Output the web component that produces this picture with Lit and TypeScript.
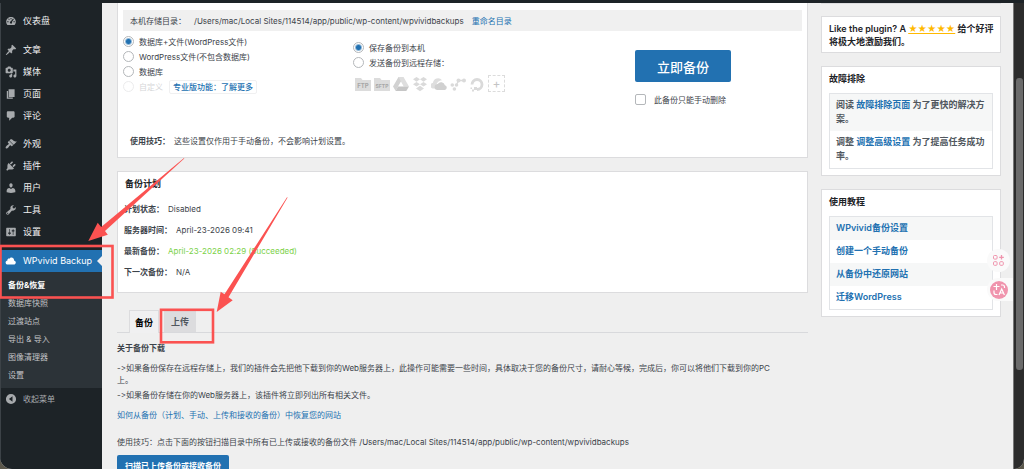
import { LitElement, html, css, svg, nothing } from "lit";
import { customElement, property, state } from "lit/decorators.js";
import { classMap } from "lit/directives/class-map.js";

const ICONS: Record<string, string> = {
  dashboard:
    "M4 16.5h12c1.2-1.300 2-3.100 2-5.200C18 6.800 14.400 3.300 10 3.300S2 6.800 2 11.300c0 2.100.8 3.900 2 5.200zM9.200 5h1.600v2.200H9.200zM5.300 6.800l1.100-1.100 1.500 1.500-1.100 1.100zM3.700 10.400h2.200V12H3.700zM14.100 10.400h2.200V12h-2.200zM13.500 5.700l1.200 1.200-3.200 4.600c.6.600.6 1.600 0 2.300-.7.800-2 .8-2.800 0-.7-.7-.7-2 0-2.700.3-.3.700-.5 1.100-.5z",
  post: "M10.440 3.020l1.820-1.820 6.360 6.350-1.830 1.820c-1.050-.68-2.480-.57-3.410.36l-.75.75c-.92.93-1.040 2.350-.35 3.410l-1.830 1.820-2.410-2.410-2.800 2.790c-.42.42-3.380 2.710-3.800 2.290s1.860-3.390 2.280-3.810l2.790-2.790L4.100 9.360l1.830-1.820c1.050.69 2.480.57 3.400-.36l.75-.75c.93-.92 1.050-2.350.36-3.410z",
  media:
    "M13 11V4c0-.55-.45-1-1-1h-1.670L9 1H5L3.670 3H2c-.55 0-1 .45-1 1v7c0 .55.45 1 1 1h10c.55 0 1-.45 1-1zM7 4.500c1.380 0 2.500 1.120 2.500 2.500S8.380 9.500 7 9.500 4.500 8.380 4.500 7 5.620 4.500 7 4.500zM14 6h5v10.500c0 1.380-1.120 2.500-2.500 2.500S14 17.880 14 16.500s1.120-2.500 2.500-2.500c.17 0 .34.02.5.05V9h-3V6zm-4 8.050V13h2v3.500c0 1.380-1.120 2.500-2.500 2.500S7 17.880 7 16.500 8.120 14 9.500 14c.17 0 .34.02.5.05z",
  page: "M6 15V2h10v13H6zm-1 1h8v2H3V5h2v11z",
  comments:
    "M5 2h9c1.100 0 2 .9 2 2v7c0 1.100-.9 2-2 2h-2l-5 5v-5H5c-1.100 0-2-.9-2-2V4c0-1.100.9-2 2-2z",
  appearance:
    "M14.480 11.060L7.410 3.990l1.500-1.500c.5-.56 2.300-.47 3.510.32 1.210.8 1.430 1.280 2.910 2.100 1.180.64 2.450 1.260 4.450.85zm-.71.71L6.700 4.700 4.930 6.470c-.39.39-.39 1.020 0 1.410l1.060 1.060c.39.39.39 1.030 0 1.420-.6.6-1.430 1.110-2.210 1.690-.35.26-.7.53-1.010.84C1.430 14.230.4 16.080 1.400 17.070c.99 1 2.840-.03 4.180-1.360.31-.31.58-.66.85-1.020.57-.78 1.080-1.610 1.690-2.210.39-.39 1.020-.39 1.410 0l1.060 1.060c.39.39 1.020.39 1.410 0z",
  plugins:
    "M13.110 4.360L9.870 7.600 8 5.730l3.240-3.240c.35-.34 1.050-.2 1.560.32.52.51.66 1.210.31 1.550zm-8 1.770l.91-1.120 9.010 9.010-1.190.84c-.71.71-2.630 1.160-3.820 1.160H6.140L4.900 17.260c-.59.59-1.540.59-2.120 0-.59-.58-.59-1.530 0-2.120l1.240-1.240v-3.880c0-1.130.4-3.190 1.090-3.890zm7.260 3.970l3.240-3.240c.34-.35 1.040-.21 1.550.31.52.51.66 1.210.31 1.550l-3.240 3.250z",
  users:
    "M10 9.250c-2.270 0-2.730-3.440-2.730-3.440C7 4.020 7.820 2 9.970 2c2.160 0 2.980 2.020 2.710 3.810 0 0-.41 3.440-2.680 3.440zm0 2.570L12.720 10c2.390 0 4.520 2.330 4.520 4.530v2.490s-3.650 1.130-7.240 1.130c-3.650 0-7.240-1.130-7.240-1.130v-2.490c0-2.250 1.940-4.480 4.470-4.480z",
  tools:
    "M16.680 9.770c-1.340 1.340-3.300 1.670-4.950.99l-5.410 6.520c-.99.99-2.590.99-3.580 0s-.99-2.590 0-3.570l6.520-5.420c-.68-1.650-.35-3.610.99-4.950 1.280-1.280 3.120-1.620 4.720-1.060l-2.890 2.890 2.820 2.820 2.860-2.870c.53 1.580.18 3.390-1.080 4.650zM3.810 16.210c.4.39 1.040.39 1.430 0 .4-.4.4-1.040 0-1.430-.39-.4-1.030-.4-1.430 0-.39.39-.39 1.030 0 1.430z",
  settings:
    "M18 16V4c0-.55-.45-1-1-1H3c-.55 0-1 .45-1 1v12c0 .55.45 1 1 1h14c.55 0 1-.45 1-1zM8 11h1c.55 0 1 .45 1 1s-.45 1-1 1H8v1.500c0 .28-.22.5-.5.5s-.5-.22-.5-.5V13H6c-.55 0-1-.45-1-1s.45-1 1-1h1V5.500c0-.28.22-.5.5-.5s.5.22.5.5V11zm5-2h-1c-.55 0-1-.45-1-1s.45-1 1-1h1V5.500c0-.28.22-.5.5-.5s.5.22.5.5V7h1c.55 0 1 .45 1 1s-.45 1-1 1h-1v5.500c0 .28-.22.5-.5.5s-.5-.22-.5-.5V9z",
  cloud:
    "M14.900 9c1.800.2 3.100 1.700 3.100 3.500 0 1.900-1.600 3.500-3.500 3.500h-10C2.600 16 1 14.400 1 12.500 1 10.700 2.300 9.300 4.100 9 4 8.900 4 8.700 4 8.500 4 7.100 5.100 6 6.500 6c.3 0 .7.1.9.2C8.100 4.900 9.400 4 11 4c2.200 0 4 1.800 4 4 0 .4-.1.7-.1 1z",
  collapse:
    "M10 1.500a8.500 8.500 0 1 0 0 17 8.500 8.500 0 0 0 0-17zM12.500 5.500v9L6.500 10z",
};

const MENU: [string, string][][] = [
  [["dashboard", "仪表盘"]],
  [["post", "文章"], ["media", "媒体"], ["page", "页面"], ["comments", "评论"]],
  [["appearance", "外观"], ["plugins", "插件"], ["users", "用户"], ["tools", "工具"], ["settings", "设置"]],
];

const SUBMENU = ["备份&恢复", "数据库快照", "过渡站点", "导出 & 导入", "图像清理器", "设置"];

const BACKUP_DIR = "/Users/mac/Local Sites/114514/app/public/wp-content/wpvividbackups";

const shared = css`
  *, *::before, *::after { box-sizing: border-box; }
  a { color: #2271b1; text-decoration: none; }
  h2, p, ul { margin: 0; padding: 0; }
  ul { list-style: none; }
  button { font-family: inherit; cursor: pointer; }
`;

@customElement("dash-icon")
export class DashIcon extends LitElement {
  @property() name = "";
  static styles = css`
    :host { display: block; flex: none; width: 12px; height: 12px; }
    svg { display: block; width: 100%; height: 100%; fill: currentColor; }
  `;
  render() {
    return html`<svg viewBox="0 0 20 20" aria-hidden="true"><path fill-rule="evenodd" d=${ICONS[this.name] ?? ""}></path></svg>`;
  }
}

@customElement("admin-menu")
export class AdminMenu extends LitElement {
  static styles = [
    shared,
    css`
      :host { display: block; background: #1d2327; border-left: 1px solid #3c4247; padding-top: 7px; font-size: 9px; }
      .group { margin-bottom: 7px; }
      .group + .group { margin-bottom: 6px; }
      .item {
        display: flex; align-items: center; gap: 6px; width: 100%; height: 22px; padding: 0 4px;
        color: #f0f0f1; font-weight: 400; line-height: 12px;
      }
      .item dash-icon { color: #a7aaad; }
      .current { position: relative; margin-top: 7px; background: #2271b1; color: #fff; }
      .current dash-icon { color: #fff; }
      .current::after {
        content: ""; position: absolute; right: 0; top: 6px;
        border: 5px solid transparent; border-left: 0; border-right-color: #f0f0f1;
      }
      .submenu { background: #2c3338; padding: 4px 0; font-size: 8px; }
      .submenu a { display: block; padding: 0 7px; line-height: 18px; color: #c3c4c7; }
      .submenu .active { color: #fff; font-weight: 700; }
      button.item { background: none; border: 0; color: #a7aaad; font-size: 8px; font-weight: 400; text-align: left; }
    `,
  ];
  render() {
    return html`
      <nav aria-label="WordPress">
        ${MENU.map(
          (group) => html`<ul class="group">
            ${group.map(([icon, label]) => html`<li><a class="item" href="#"><dash-icon name=${icon}></dash-icon>${label}</a></li>`)}
          </ul>`
        )}
        <a class="item current" href="#"><dash-icon name="cloud"></dash-icon>WPvivid Backup</a>
        <ul class="submenu">
          ${SUBMENU.map((label, i) => html`<li><a href="#" class=${classMap({ active: i === 0 })}>${label}</a></li>`)}
        </ul>
        <button class="item" type="button"><dash-icon name="collapse"></dash-icon>收起菜单</button>
      </nav>
    `;
  }
}

const folder = (label: string, size: number) => svg`
  <path d="M0 2h6l1.500 2H16v11H0z" fill="#dcdcdc"></path>
  <text x="8" y="12" font-size=${size} font-weight="700" text-anchor="middle" fill="#a6a6a6">${label}</text>`;

const REMOTES = [
  { name: "FTP", art: folder("FTP", 6) },
  { name: "SFTP", art: folder("SFTP", 5) },
  {
    name: "Google Drive",
    art: svg`<path d="M5.500 1h5L5 10.500 2.700 15 0 10.500z" fill="#d2d2d2"></path>
      <path d="M5.500 1h5L16 10.500h-5.300z" fill="#dedede"></path>
      <path d="M5 10.500h11L13.300 15H2.700z" fill="#c6c6c6"></path>`,
  },
  {
    name: "Dropbox",
    art: svg`<path d="M4.500 1L8 3.300 4.500 5.700 1 3.300zM11.500 1L15 3.300l-3.500 2.400L8 3.300zM4.500 5.900L8 8.200l-3.500 2.400L1 8.200zM11.500 5.900L15 8.200l-3.500 2.400L8 8.200zM8 9.800l4 2.700L8 15.200l-4-2.700z" fill="#dadada"></path>`,
  },
  {
    name: "OneDrive",
    art: svg`<path d="M1.500 12.500A3 3 0 0 1 2 6.700 5 5 0 0 1 11 4.300 6 6 0 0 0 6 7.500 4 4 0 0 0 4.500 12.500z" fill="#dedede"></path>
      <path d="M6.500 14a3 3 0 0 1 .2-6 4 4 0 0 1 7.200 1.200A2.500 2.500 0 0 1 14 14z" fill="#d0d0d0"></path>`,
  },
  {
    name: "Amazon S3",
    art: svg`<g fill="#dadada"><circle cx="2.300" cy="9" r="1.800"></circle><circle cx="6.500" cy="9" r="1.800"></circle><circle cx="4.400" cy="13" r="1.800"></circle>
      <circle cx="8.500" cy="4.500" r="2"></circle><circle cx="14" cy="4.500" r="2"></circle></g>
      <path d="M6.500 9l2-4.500H14" fill="none" stroke="#dadada" stroke-width="1.300"></path>`,
  },
  {
    name: "DigitalOcean",
    art: svg`<path d="M3 8.500a5 5 0 1 1 5 5" fill="none" stroke="#dadada" stroke-width="2.800"></path>
      <path d="M5 11h3v3H5zM3 13.500h2v2H3zM1.500 11.500h1.500v1.500H1.500z" fill="#dadada"></path>`,
  },
];

@customElement("backup-panel")
export class BackupPanel extends LitElement {
  @state() private content = 0;
  @state() private target = 0;
  static styles = [
    shared,
    css`
      :host { display: block; background: #fff; border: 1px solid #dcdcde; border-top: 0; padding: 7px 5px 10px; }
      .dir { display: flex; align-items: center; background: #f0f0f0; height: 21px; padding: 0 7px; gap: 8px; }
      .options { display: grid; grid-template-columns: 230px 282px 1fr; min-height: 104px; }
      .what { padding-top: 3px; }
      .where { padding-top: 9px; }
      .row { display: flex; align-items: center; gap: 5px; height: 15px; }
      .off { color: #d5d6d8; }
      .pro { border: 1px solid #f0f0f1; border-radius: 2px; padding: 0 3px; margin-left: 1px; font-weight: 500; line-height: 12px; }
      input { appearance: none; flex: none; margin: 0; width: 11px; height: 11px; border: 1px solid #b4b7ba; background: #fff; }
      input[type="radio"] { border-radius: 50%; }
      input[type="radio"]:checked { background: radial-gradient(circle, #2271b1 2px, #fff 4px); }
      input[type="checkbox"] { border-radius: 2px; }
      input:disabled { border-color: #ececed; }
      .remotes { display: flex; gap: 3px; padding: 5px 0 0 2px; align-items: center; }
      .remotes svg { width: 16px; height: 16px; }
      .add { width: 17px; height: 17px; border: 1px dashed #dcdcdc; background: none; color: #c4c4c4; font-size: 12px; line-height: 12px; padding: 0; }
      .go { padding-top: 19px; }
      .primary { display: block; width: 96px; height: 32px; border: 0; border-radius: 2px; background: #2271b1; color: #fff; font-size: 13px; font-weight: 500; padding: 0; }
      .keep { display: flex; align-items: center; gap: 8px; margin-top: 12px; }
      .tip { padding: 0 7px; line-height: 12px; }
      .tip b { font-weight: 700; margin-right: 4px; }
    `,
  ];
  private radio(group: string, label: string, index: number, current: number, pick: (i: number) => void, disabled = false) {
    return html`<input type="radio" name=${group} id=${group + index} .checked=${index === current} ?disabled=${disabled} @change=${() => pick(index)} />
      <label for=${group + index}>${label}</label>`;
  }
  render() {
    const what = ["数据库+文件(WordPress文件)", "WordPress文件(不包含数据库)", "数据库", "自定义"];
    const where = ["保存备份到本机", "发送备份到远程存储："];
    return html`
      <div class="dir"><span>本机存储目录：</span><span>${BACKUP_DIR}</span><a href="#">重命名目录</a></div>
      <div class="options">
        <div class="what">
          ${what.map(
            (label, i) => html`<div class=${classMap({ row: true, off: i === 3 })}>
              ${this.radio("what", label, i, this.content, (n) => (this.content = n), i === 3)}
              ${i === 3 ? html`<a class="pro" href="#">专业版功能：了解更多</a>` : nothing}
            </div>`
          )}
        </div>
        <div class="where">
          ${where.map((label, i) => html`<div class="row">${this.radio("where", label, i, this.target, (n) => (this.target = n))}</div>`)}
          <div class="remotes">
            ${REMOTES.map((r) => html`<svg viewBox="0 0 16 16" role="img" aria-label=${r.name}>${r.art}</svg>`)}
            <button class="add" type="button">+</button>
          </div>
        </div>
        <div class="go">
          <button class="primary" type="button">立即备份</button>
          <div class="keep"><input type="checkbox" id="keep" /><label for="keep">此备份只能手动删除</label></div>
        </div>
      </div>
      <p class="tip"><b>使用技巧：</b>这些设置仅作用于手动备份，不会影响计划设置。</p>
    `;
  }
}

@customElement("schedule-panel")
export class SchedulePanel extends LitElement {
  static styles = [
    shared,
    css`
      :host { display: block; background: #fff; border: 1px solid #dcdcde; margin-top: 13px; padding: 5px 6px 9px; }
      h2 { font-size: 9px; line-height: 14px; padding-left: 1px; color: #1d2327; margin-bottom: 8px; }
      .row { display: flex; gap: 4px; line-height: 21px; }
      b { font-weight: 700; }
      .ok { color: #7bd148; }
    `,
  ];
  render() {
    const rows = [
      ["计划状态：", "Disabled"],
      ["服务器时间：", "April-23-2026 09:41"],
      ["最新备份：", "April-23-2026 02:29 (Succeeded)"],
      ["下一次备份：", "N/A"],
    ];
    return html`<h2>备份计划</h2>
      ${rows.map(([k, v], i) => html`<div class="row"><b>${k}</b><span class=${classMap({ ok: i === 2 })}>${v}</span></div>`)}`;
  }
}

@customElement("backup-list")
export class BackupList extends LitElement {
  static styles = [
    shared,
    css`
      :host { display: block; margin-top: 17px; }
      .tabs { display: flex; gap: 5px; padding-left: 12px; border-bottom: 1px solid #d8d9dc; }
      .tab { height: 22px; padding: 0 7px; border: 0; background: #dcdcde; color: #50575e; font-size: 9px; font-weight: 600; }
      .tab.on { margin-bottom: -1px; height: 23px; padding: 0 5px; border: 1px solid #dcdcde; border-bottom: 0; background: #f0f0f1; color: #000; font-weight: 700; }
      h2 { font-size: 8px; line-height: 12px; margin: 9px 0 8px; }
      p { line-height: 12px; margin-bottom: 3px; }
      .guide { margin: 8px 0 15px; }
      .primary { height: 20px; padding: 0 8px; margin-top: 4px; border: 0; border-radius: 2px; background: #2271b1; color: #fff; font-size: 8px; font-weight: 600; }
    `,
  ];
  render() {
    return html`
      <div class="tabs" role="tablist">
        <button class="tab on" role="tab" type="button" aria-selected="true">备份</button>
        <button class="tab" role="tab" type="button" aria-selected="false">上传</button>
      </div>
      <h2>关于备份下载</h2>
      <p>-&gt;如果备份保存在远程存储上，我们的插件会先把他下载到你的Web服务器上，此操作可能需要一些时间，具体取决于您的备份尺寸，请耐心等候，完成后，你可以将他们下载到你的PC<br />上。</p>
      <p>-&gt;如果备份存储在你的Web服务器上，该插件将立即列出所有相关文件。</p>
      <p class="guide"><a href="#">如何从备份（计划、手动、上传和接收的备份）中恢复您的网站</a></p>
      <p>使用技巧：点击下面的按钮扫描目录中所有已上传或接收的备份文件 ${BACKUP_DIR}</p>
      <button class="primary" type="button">扫描已上传备份或接收备份</button>
    `;
  }
}

@customElement("side-cards")
export class SideCards extends LitElement {
  static styles = [
    shared,
    css`
      :host { display: block; font-size: 9px; font-weight: 600; color: #50575e; }
      .card { background: #fff; border: 1px solid #dcdcde; padding: 5px 7px 6px; margin-bottom: 13px; }
      .rate { margin-top: 12px; padding: 5px 2px 4px 7px; color: #1d2327; line-height: 13px; }
      .edge { border-bottom: 1px solid #dcdcde; }
      .stars { color: #ffb900; text-decoration: underline; }
      h2 { font-size: 9px; line-height: 14px; color: #1d2327; margin-bottom: 7px; }
      ul { border: 1px solid #e2e4e7; }
      li:nth-child(odd) { background: #f6f7f7; }
      li { padding: 4px 6px 5px; line-height: 14px; }
    `,
  ];
  render() {
    return html`
      <div class="edge"></div>
      <section class="card rate">Like the plugin? A <a class="stars" href="#">★★★★★</a> 给个好评将极大地激励我们。</section>
      <section class="card">
        <h2>故障排除</h2>
        <ul>
          <li>阅读 <a href="#">故障排除页面</a> 为了更快的解决方案。</li>
          <li>调整 <a href="#">调整高级设置</a> 为了提高任务成功率。</li>
        </ul>
      </section>
      <section class="card">
        <h2>使用教程</h2>
        <ul>
          ${["WPvivid备份设置", "创建一个手动备份", "从备份中还原网站", "迁移WordPress"].map((t) => html`<li><a href="#">${t}</a></li>`)}
        </ul>
      </section>
    `;
  }
}

@customElement("app-root")
export class AppRoot extends LitElement {
  static styles = [
    shared,
    css`
      :host {
        display: block; position: relative; height: 100vh; overflow: hidden; background: #5b574b;
        font-family: Inter, "Noto Sans CJK SC", sans-serif; font-size: 8px; color: #3c434a;
        font-variant-ligatures: none; font-feature-settings: "calt" 0;
      }
      .window {
        display: grid; grid-template: 3px 1fr / 102px 1fr 11px; height: 100%; overflow: hidden;
        background: #f0f0f1; border-radius: 0 0 10px 12px;
      }
      .bar { grid-column: 1 / -1; background: #1d2327; }
      .content { display: grid; grid-template-columns: minmax(0, 1fr) 180px; gap: 13px; align-items: start; padding: 0 12px 0 15px; min-width: 0; min-height: 0; background: #efefef; }
      .scroll { background: #2c2c2c; border-left: 1px solid #777; padding: 75px 1px 0 2px; }
      .thumb { height: 292px; border-radius: 3px; background: #6b6b6b; }
      .marks { position: absolute; left: 0; top: 0; width: 1024px; height: 469px; pointer-events: none; }
      .float { position: absolute; border: 0; padding: 0; background: #fafafa; }
      .float svg { display: block; }
      .apps { right: 14px; top: 249px; width: 23px; height: 23px; border-radius: 50%; }
      .translate { right: 11px; top: 278px; width: 26px; height: 23px; border-radius: 12px 0 0 12px; }
    `,
  ];
  render() {
    return html`
      <div class="window">
        <div class="bar"></div>
        <admin-menu></admin-menu>
        <div class="content">
          <main>
            <backup-panel></backup-panel>
            <schedule-panel></schedule-panel>
            <backup-list></backup-list>
          </main>
          <side-cards></side-cards>
        </div>
        <div class="scroll"><div class="thumb"></div></div>
      </div>
      <button class="float apps" type="button" aria-label="Apps">
        <svg viewBox="0 0 23 23" fill="none" stroke="#f094ad" stroke-width="1">
          <rect x="6.500" y="6.500" width="3.600" height="3.600" rx="1"></rect>
          <rect x="6.500" y="12.700" width="3.600" height="3.600" rx="1"></rect>
          <rect x="12.700" y="12.700" width="3.600" height="3.600" rx="1"></rect>
          <path d="M14.500 6v4.600M12.200 8.300h4.600" stroke-width="1.300"></path>
        </svg>
      </button>
      <button class="float translate" type="button" aria-label="Translate">
        <svg viewBox="0 0 26 23" fill="none" stroke="#fff" stroke-width="1.200">
          <circle cx="12" cy="12" r="9" fill="#f094ad" stroke="none"></circle>
          <path d="M9.500 6v6M6.500 8.500h6M7 12.500v2a2 2 0 0 0 2 2h1.500M14 7h1.500a2 2 0 0 1 2 2v1M12 17l2.700-6 2.700 6M13 15h3.500"></path>
        </svg>
      </button>
      <svg class="marks" viewBox="0 0 1024 469" aria-hidden="true">
        <g fill="none" stroke="#fb5251" stroke-width="2.600">
          <rect x="0.500" y="246" width="112" height="51.500"></rect>
          <rect x="161" y="309.800" width="52" height="32.500"></rect>
        </g>
        <g fill="#fb5251">
          <path d="M88.300 241L97.700 222.700l3.500 4.300L184 158l.3.500L105 231l2.800 3.700z"></path>
          <path d="M216.700 312l4-20.200 3.800 2.400L287 197.300l.6.300L228.500 297.300l4.200 3z"></path>
        </g>
      </svg>
    `;
  }
}
